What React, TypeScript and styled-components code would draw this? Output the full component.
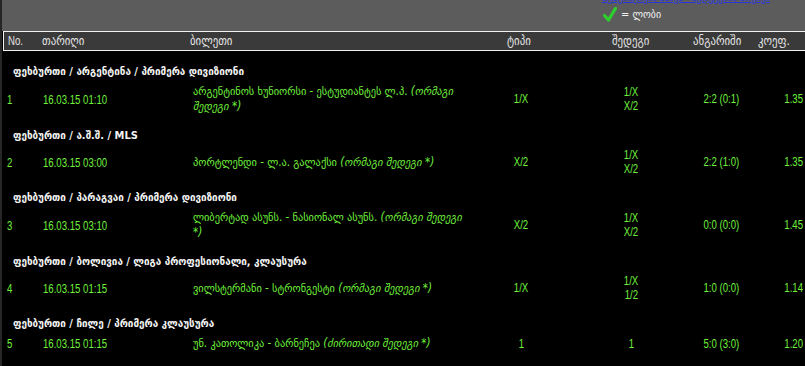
import React from "react";
import styled, { createGlobalStyle } from "styled-components";

const GlobalStyle = createGlobalStyle`
  html, body { margin: 0; padding: 0; background: #000; }
  body { overflow: hidden; }
`;

const GREEN = "#70f23c";
const SANS = `"Liberation Sans", Arial, sans-serif`;
const GEO = `"DejaVu Sans Condensed", "DejaVu Sans", sans-serif`;

const Page = styled.div`
  width: 803px;
  height: 366px;
  overflow: hidden;
  border-left: 2px solid #262626;
  background: #000;
`;

const TopBar = styled.div`
  height: 31px;
  background: #5c5c5c;
  display: flex;
  padding-left: 600px;
  box-sizing: border-box;
`;

const Legend = styled.div`
  display: flex;
  flex-direction: column;
`;

const LinkClip = styled.div`
  height: 4px;
  width: 172px;
  overflow: hidden;
  display: flex;
  align-items: flex-end;
`;

const LinkText = styled.a`
  font-family: ${GEO};
  font-size: 10px;
  line-height: 12px;
  color: #2a35e0;
  text-decoration: underline;
  white-space: nowrap;
`;

const LegendRow = styled.div`
  display: flex;
  align-items: center;
  gap: 4px;
  margin-top: 3px;
  padding-left: 1px;
  font-family: ${GEO};
  font-size: 11px;
  color: #f2f2f2;
  height: 15px;
`;

const Table = styled.div`
  margin-left: 1px;
  width: 802px;
`;

const HeaderRow = styled.div`
  display: grid;
  grid-template-columns: 34px 148px 317px 105px 81px 65px 1fr;
  height: 20px;
  box-sizing: border-box;
  border: 1px solid #f0f0f0;
  border-right: none;
  background: #3a3a3a;
  padding-left: 4px;
  align-items: center;
`;

const HeaderCell = styled.div`
  font-family: ${GEO};
  font-size: 12px;
  line-height: 18px;
  color: #e4e4e4;
  white-space: nowrap;
`;

const Narrow = styled.span<{ $origin?: string }>`
  display: inline-block;
  font-family: ${SANS};
  font-size: 12px;
  transform: scaleX(0.8);
  transform-origin: ${(p) => p.$origin ?? "left"} center;
  white-space: nowrap;
`;

const Body = styled.div`
  padding: 2px 0 14px;
  border-bottom: 1px solid #7a7a7a;
`;

const GroupRow = styled.div`
  padding: 11px 0 1px 10px;
  font-family: ${GEO};
  font-weight: bold;
  font-size: 11px;
  line-height: 16px;
  color: #f4f4f4;
  white-space: nowrap;
`;

const DataRow = styled.div`
  display: grid;
  grid-template-columns: 36px 150px 273px 110px 110px 70px 76px;
  padding: 3px 0 3px 4px;
  align-items: center;
  color: ${GREEN};
  line-height: 14px;
`;

const Cell = styled.div`
  white-space: nowrap;
`;

const CenterCell = styled.div`
  display: flex;
  flex-direction: column;
  align-items: center;
  white-space: nowrap;
`;

const Ticket = styled.div`
  font-family: ${GEO};
  font-size: 11.5px;
  line-height: 15px;
  white-space: nowrap;
`;

const Note = styled.i`
  font-style: italic;
`;

type Row = {
  group: string;
  no: number;
  date: string;
  teams: string;
  note: string[];
  type: string;
  result: string[];
  score: string;
  coef: string;
};

const rows: Row[] = [
  {
    group: "ფეხბურთი / არგენტინა / პრიმერა დივიზიონი",
    no: 1,
    date: "16.03.15 01:10",
    teams: "არგენტინოს ხუნიორსი - ესტუდიანტეს ლ.პ.",
    note: ["(ორმაგი", "შედეგი *)"],
    type: "1/X",
    result: ["1/X", "X/2"],
    score: "2:2 (0:1)",
    coef: "1.35",
  },
  {
    group: "ფეხბურთი / ა.შ.შ. / MLS",
    no: 2,
    date: "16.03.15 03:00",
    teams: "პორტლენდი - ლ.ა. გალაქსი",
    note: ["(ორმაგი შედეგი *)"],
    type: "X/2",
    result: ["1/X", "X/2"],
    score: "2:2 (1:0)",
    coef: "1.35",
  },
  {
    group: "ფეხბურთი / პარაგვაი / პრიმერა დივიზიონი",
    no: 3,
    date: "16.03.15 03:10",
    teams: "ლიბერტად ასუნს. - ნასიონალ ასუნს.",
    note: ["(ორმაგი შედეგი", "*)"],
    type: "X/2",
    result: ["1/X", "X/2"],
    score: "0:0 (0:0)",
    coef: "1.45",
  },
  {
    group: "ფეხბურთი / ბოლივია / ლიგა პროფესიონალი, კლაუსურა",
    no: 4,
    date: "16.03.15 01:15",
    teams: "ვილსტერმანი - სტრონგესტი",
    note: ["(ორმაგი შედეგი *)"],
    type: "1/X",
    result: ["1/X", "1/2"],
    score: "1:0 (0:0)",
    coef: "1.14",
  },
  {
    group: "ფეხბურთი / ჩილე / პრიმერა კლაუსურა",
    no: 5,
    date: "16.03.15 01:15",
    teams: "უნ. კათოლიკა - ბარნეჩეა",
    note: ["(ძირითადი შედეგი *)"],
    type: "1",
    result: ["1"],
    score: "5:0 (3:0)",
    coef: "1.20",
  },
];

const headers = ["თარიღი", "ბილეთი", "ტიპი", "შედეგი", "ანგარიში", "კოეფ."];

const Check = () => (
  <svg width="14" height="15" viewBox="0 0 14 15">
    <path d="M1.5 8.5 L5.5 13 L12.5 1.5" fill="none" stroke="#2ccf2c" strokeWidth="3.2" strokeLinecap="round" strokeLinejoin="round" />
  </svg>
);

export default function App() {
  return (
    <>
      <GlobalStyle />
      <Page>
        <TopBar>
          <Legend>
            <LinkClip>
              <LinkText>სტატისტიკის ნახვა - შედეგების არქივი</LinkText>
            </LinkClip>
            <LegendRow>
              <Check />
              <span>= ლობი</span>
            </LegendRow>
          </Legend>
        </TopBar>
        <Table>
          <HeaderRow>
            <HeaderCell>
              <Narrow>No.</Narrow>
            </HeaderCell>
            {headers.map((h) => (
              <HeaderCell key={h}>{h}</HeaderCell>
            ))}
          </HeaderRow>
          <Body>
            {rows.map((r) => (
              <React.Fragment key={r.no}>
                <GroupRow>{r.group}</GroupRow>
                <DataRow>
                  <Cell>
                    <Narrow>{r.no}</Narrow>
                  </Cell>
                  <Cell>
                    <Narrow>{r.date}</Narrow>
                  </Cell>
                  <Ticket>
                    {r.teams} <Note>{r.note[0]}</Note>
                    {r.note.length > 1 && (
                      <>
                        <br />
                        <Note>{r.note[1]}</Note>
                      </>
                    )}
                  </Ticket>
                  <CenterCell>
                    <Narrow $origin="center">{r.type}</Narrow>
                  </CenterCell>
                  <CenterCell>
                    {r.result.map((x, i) => (
                      <Narrow key={i} $origin="center">
                        {x}
                      </Narrow>
                    ))}
                  </CenterCell>
                  <CenterCell>
                    <Narrow $origin="center">{r.score}</Narrow>
                  </CenterCell>
                  <CenterCell>
                    <Narrow $origin="center">{r.coef}</Narrow>
                  </CenterCell>
                </DataRow>
              </React.Fragment>
            ))}
          </Body>
        </Table>
      </Page>
    </>
  );
}
